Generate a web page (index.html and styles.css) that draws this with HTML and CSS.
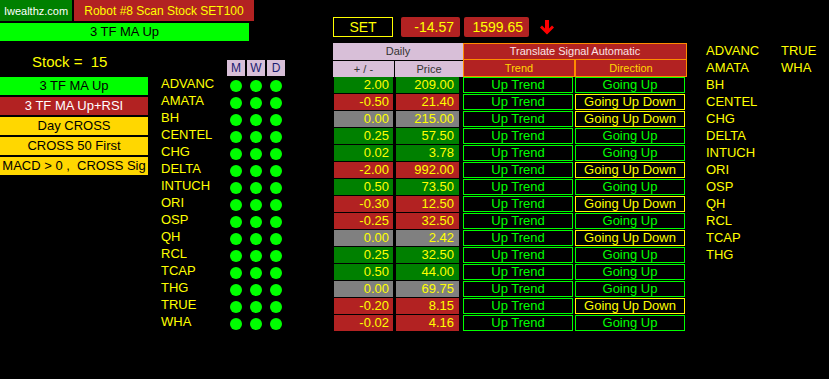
FILE: index.html
```html
<!DOCTYPE html>
<html>
<head>
<meta charset="utf-8">
<link rel="stylesheet" href="styles.css">
</head>
<body>
<div class="page">
  <div class="left">
    <div class="topbar">
      <div class="site">Iwealthz.com</div>
      <div class="robot">Robot #8 Scan Stock SET100</div>
    </div>
    <div class="modebar">3 TF MA Up</div>
    <div class="lower">
      <div class="panel">
        <div class="stock">Stock =  15</div>
        <div class="btns">
          <div class="btn btn-green">3 TF MA Up</div>
          <div class="btn btn-red">3 TF MA Up+RSI</div>
          <div class="btn btn-gold">Day CROSS</div>
          <div class="btn btn-gold">CROSS 50 First</div>
          <div class="btn btn-gold">MACD &gt; 0 ,  CROSS Sig</div>
        </div>
      </div>
      <div class="names">
        <div>ADVANC</div><div>AMATA</div><div>BH</div><div>CENTEL</div><div>CHG</div>
        <div>DELTA</div><div>INTUCH</div><div>ORI</div><div>OSP</div><div>QH</div>
        <div>RCL</div><div>TCAP</div><div>THG</div><div>TRUE</div><div>WHA</div>
      </div>
      <div class="dots">
        <div class="tf">M</div><div class="tf">W</div><div class="tf">D</div>
        <span class="dot"></span><span class="dot"></span><span class="dot"></span>
        <span class="dot"></span><span class="dot"></span><span class="dot"></span>
        <span class="dot"></span><span class="dot"></span><span class="dot"></span>
        <span class="dot"></span><span class="dot"></span><span class="dot"></span>
        <span class="dot"></span><span class="dot"></span><span class="dot"></span>
        <span class="dot"></span><span class="dot"></span><span class="dot"></span>
        <span class="dot"></span><span class="dot"></span><span class="dot"></span>
        <span class="dot"></span><span class="dot"></span><span class="dot"></span>
        <span class="dot"></span><span class="dot"></span><span class="dot"></span>
        <span class="dot"></span><span class="dot"></span><span class="dot"></span>
        <span class="dot"></span><span class="dot"></span><span class="dot"></span>
        <span class="dot"></span><span class="dot"></span><span class="dot"></span>
        <span class="dot"></span><span class="dot"></span><span class="dot"></span>
        <span class="dot"></span><span class="dot"></span><span class="dot"></span>
        <span class="dot"></span><span class="dot"></span><span class="dot"></span>
      </div>
    </div>
  </div>

  <div class="mid">
    <div class="setrow">
      <div class="set">SET</div>
      <div class="val chg">-14.57</div>
      <div class="val idx">1599.65</div>
      <svg class="arrow" viewBox="0 0 14 15" width="14" height="15"><path d="M5 0H9V8.5L12 5.5L14 7.5L7 14.5L0 7.5L2 5.5L5 8.5Z" fill="#ff0000"/></svg>
    </div>
    <div class="tbl">
      <div class="hd daily">Daily</div>
      <div class="ht trans">Translate Signal Automatic</div>
      <div class="hd hs pm">+ / -</div>
      <div class="hd hs">Price</div>
      <div class="ht sub">Trend</div>
      <div class="ht sub">Direction</div>

      <div class="num c1 g">2.00</div><div class="num c2 g">209.00</div><div class="sig">Up Trend</div><div class="sig">Going Up</div>
      <div class="num c1 r">-0.50</div><div class="num c2 r">21.40</div><div class="sig">Up Trend</div><div class="sig y">Going Up Down</div>
      <div class="num c1 z">0.00</div><div class="num c2 z">215.00</div><div class="sig">Up Trend</div><div class="sig y">Going Up Down</div>
      <div class="num c1 g">0.25</div><div class="num c2 g">57.50</div><div class="sig">Up Trend</div><div class="sig">Going Up</div>
      <div class="num c1 g">0.02</div><div class="num c2 g">3.78</div><div class="sig">Up Trend</div><div class="sig">Going Up</div>
      <div class="num c1 r">-2.00</div><div class="num c2 r">992.00</div><div class="sig">Up Trend</div><div class="sig y">Going Up Down</div>
      <div class="num c1 g">0.50</div><div class="num c2 g">73.50</div><div class="sig">Up Trend</div><div class="sig">Going Up</div>
      <div class="num c1 r">-0.30</div><div class="num c2 r">12.50</div><div class="sig">Up Trend</div><div class="sig y">Going Up Down</div>
      <div class="num c1 r">-0.25</div><div class="num c2 r">32.50</div><div class="sig">Up Trend</div><div class="sig">Going Up</div>
      <div class="num c1 z">0.00</div><div class="num c2 z">2.42</div><div class="sig">Up Trend</div><div class="sig y">Going Up Down</div>
      <div class="num c1 g">0.25</div><div class="num c2 g">32.50</div><div class="sig">Up Trend</div><div class="sig">Going Up</div>
      <div class="num c1 g">0.50</div><div class="num c2 g">44.00</div><div class="sig">Up Trend</div><div class="sig">Going Up</div>
      <div class="num c1 z">0.00</div><div class="num c2 z">69.75</div><div class="sig">Up Trend</div><div class="sig">Going Up</div>
      <div class="num c1 r">-0.20</div><div class="num c2 r">8.15</div><div class="sig">Up Trend</div><div class="sig y">Going Up Down</div>
      <div class="num c1 r">-0.02</div><div class="num c2 r">4.16</div><div class="sig">Up Trend</div><div class="sig">Going Up</div>
    </div>
  </div>

  <div class="right">
    <div>ADVANC</div><div>AMATA</div><div>BH</div><div>CENTEL</div><div>CHG</div>
    <div>DELTA</div><div>INTUCH</div><div>ORI</div><div>OSP</div><div>QH</div>
    <div>RCL</div><div>TCAP</div><div>THG</div><div>TRUE</div><div>WHA</div>
  </div>
</div>
</body>
</html>
```

FILE: styles.css
```css
* { box-sizing: border-box; margin: 0; padding: 0; }
body {
  background: #000;
  font-family: "Liberation Sans", Arial, sans-serif;
  font-size: 13px;
  width: 829px;
  height: 379px;
  overflow: hidden;
}
.page { display: flex; align-items: flex-start; }

/* left column */
.left { width: 333px; flex: none; }
.topbar { display: flex; gap: 2px; height: 21px; }
.site {
  width: 72px; background: #008000; color: #fff; font-size: 11px;
  display: flex; align-items: center; justify-content: center;
}
.robot {
  width: 180px; background: #b22222; color: #ff0; font-size: 12px;
  display: flex; align-items: center; justify-content: center;
}
.modebar {
  margin-top: 2px; width: 249px; height: 18px; background: #0f0; color: #000;
  text-align: center; line-height: 18px;
}
.lower { display: flex; align-items: flex-start; }
.panel { width: 148px; flex: none; padding-top: 12px; }
.stock {
  color: #ff0; font-size: 15px; line-height: 17px; padding-left: 32px;
  white-space: pre; margin-bottom: 7px;
}
.btns { display: flex; flex-direction: column; gap: 2px; }
.btn { height: 18px; line-height: 18px; text-align: center; white-space: pre; overflow: hidden; }
.btn-green { background: #0f0; color: #000; }
.btn-red { background: #b22222; color: #fff; }
.btn-gold { background: #ffd700; color: #000; }

.names { margin-left: 13px; width: 66px; flex: none; padding-top: 34px; color: #ff0; line-height: 17px; }

.dots {
  padding-top: 19px;
  display: grid;
  grid-template-columns: repeat(3, 18px);
  column-gap: 2px;
  grid-template-rows: 17px;
  grid-auto-rows: 17px;
}
.tf {
  background: #d8bfd8; color: #1c1c70; height: 16px; font-size: 12px;
  text-align: center; line-height: 16px;
}
.dot {
  display: block; width: 12px; height: 12px; border-radius: 50%;
  background: #0f0; justify-self: center; margin-top: 2.5px;
}

/* middle column */
.mid { margin-top: 17px; width: 354px; flex: none; }
.setrow { display: flex; align-items: center; height: 20px; margin-bottom: 6px; }
.set {
  width: 60px; height: 20px; border: 1px solid #ff0; color: #ff0; font-size: 14px;
  text-align: center; line-height: 18px;
}
.val {
  height: 20px; background: #b22222; color: #ff0; font-size: 14px;
  text-align: right; line-height: 20px; border-radius: 2px; padding-right: 6px;
}
.chg { width: 59px; margin-left: 8px; }
.idx { width: 65px; margin-left: 4px; }
.arrow { margin-left: 11px; display: block; }

.tbl {
  display: grid;
  grid-template-columns: 62px 68px 112px 112px;
  grid-auto-rows: 17px;
}
.hd { background: #d8bfd8; color: #333; font-size: 11px; text-align: center; line-height: 17px; }
.daily { grid-column: 1 / 3; }
.hs { border-top: 1px solid #000; line-height: 16px; }
.pm { border-right: 1px solid #000; }
.ht {
  background: #b22222; border: 1px solid #ff8c00; font-size: 11px;
  text-align: center; line-height: 15px;
}
.trans { grid-column: 3 / 5; color: #fbe3e6; }
.sub { color: #ffd700; border-top: none; line-height: 16px; }

.num {
  height: 16px; color: #ff0; text-align: right;
  font-family: "Liberation Sans Narrow", "Liberation Sans", sans-serif;
  font-size: 13px; line-height: 16px;
}
.c1 { margin: 0 2px 0 1px; padding-right: 4px; }
.c2 { margin: 0 4px 0 1px; padding-right: 5px; }
.g { background: #008000; }
.r { background: #b22222; }
.z { background: #808080; }
.sig {
  height: 16px; border: 1px solid #0f0; color: #0f0; text-align: center;
  line-height: 14px; margin-right: 2px; background: #000;
}
.sig.y { border-color: #ff0; color: #ff0; }

/* right column */
.right {
  margin-top: 42px; margin-left: 19px;
  display: grid;
  grid-template-rows: repeat(13, 17px);
  grid-auto-flow: column;
  grid-auto-columns: 75px;
  color: #ff0; line-height: 17px;
}
```
